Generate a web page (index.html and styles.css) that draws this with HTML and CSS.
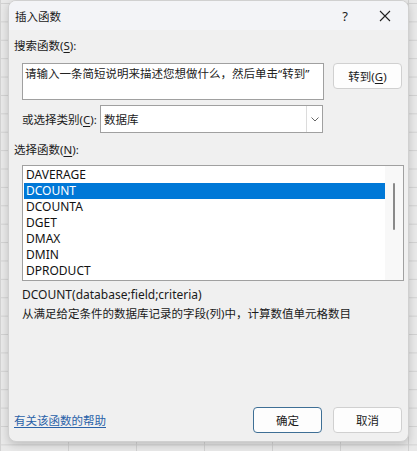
FILE: index.html
```html
<!DOCTYPE html>
<html lang="zh-CN">
<head>
<meta charset="utf-8">
<title>插入函数</title>
<link rel="stylesheet" href="styles.css">
</head>
<body>
<div class="dialog">
  <div class="titlebar">
    <span class="title cjk">插入函数</span>
    <span class="help">?</span>
    <span class="close">
      <svg width="12" height="12" viewBox="0 0 12 12"><path d="M1 1 L11 11 M11 1 L1 11" stroke="#222" stroke-width="1.1" fill="none"/></svg>
    </span>
  </div>
  <div class="content">
    <div class="label cjk">搜索函数(<u>S</u>):</div>
    <div class="search-row">
      <div class="textbox cjk">请输入一条简短说明来描述您想做什么，然后单击“转到”</div>
      <div class="btn cjk">转到(<u>G</u>)</div>
    </div>
    <div class="category-row">
      <span class="cat-label cjk">或选择类别(<u>C</u>):</span>
      <div class="select">
        <span class="select-value cjk">数据库</span>
        <span class="select-arrow">
          <svg width="8" height="5" viewBox="0 0 8 5"><path d="M0.5 0.5 L4 4 L7.5 0.5" stroke="#666" stroke-width="1" fill="none"/></svg>
        </span>
      </div>
    </div>
    <div class="label label-list cjk">选择函数(<u>N</u>):</div>
    <div class="listbox">
      <div class="items">
        <div class="item">DAVERAGE</div>
        <div class="item selected">DCOUNT</div>
        <div class="item">DCOUNTA</div>
        <div class="item">DGET</div>
        <div class="item">DMAX</div>
        <div class="item">DMIN</div>
        <div class="item">DPRODUCT</div>
      </div>
      <div class="scrollbar"><div class="thumb"></div></div>
    </div>
    <div class="syntax">DCOUNT(database;field;criteria)</div>
    <div class="desc cjk">从满足给定条件的数据库记录的字段(列)中，计算数值单元格数目</div>
  </div>
  <div class="footer">
    <a class="helplink cjk">有关该函数的帮助</a>
    <div class="buttons">
      <div class="btn btn-default cjk">确定</div>
      <div class="btn cjk">取消</div>
    </div>
  </div>
</div>
</body>
</html>
```

FILE: styles.css
```css
html, body {
  margin: 0;
  padding: 0;
}
body {
  width: 417px;
  height: 451px;
  overflow: hidden;
  background-color: #e9e9e9;
  background-image:
    linear-gradient(to right, #d2d2d2 1px, transparent 1px),
    linear-gradient(to bottom, #d2d2d2 1px, transparent 1px);
  background-size: 68px 18.4px;
  background-position: 0 0, 0 3px;
  font-family: "Noto Sans", "Noto Sans CJK SC", sans-serif;
  font-size: 12px;
  color: #1a1a1a;
}
.cjk {
  font-size: 11.5px;
  white-space: nowrap;
}
.dialog {
  margin-left: 8px;
  width: 401px;
  height: 442px;
  box-sizing: border-box;
  background: #f0f0f0;
  border-radius: 8px;
  border: 1px solid #d0d0d0;
  box-shadow: 0 3px 8px rgba(0,0,0,0.18);
  display: flex;
  flex-direction: column;
  overflow: hidden;
}
.titlebar {
  height: 29px;
  display: flex;
  align-items: center;
  background: #f3f4f7;
  padding-left: 6px;
}
.title {
  font-family: "Noto Sans CJK SC", sans-serif;
  flex: 1;
}
.help {
  width: 12px;
  text-align: center;
  font-size: 13px;
  margin-right: 28px;
}
.close {
  width: 12px;
  height: 12px;
  margin-right: 17px;
  display: flex;
}
.content {
  padding: 0 5px;
  display: flex;
  flex-direction: column;
}
.label {
  margin-top: 8px;
  height: 16px;
  line-height: 16px;
}
u {
  text-decoration: underline;
  text-underline-offset: 2px;
}
.search-row {
  margin-top: 9px;
  padding-left: 8px;
  display: flex;
  align-items: flex-start;
  gap: 9px;
}
.textbox {
  width: 302px;
  height: 37px;
  box-sizing: border-box;
  background: #fff;
  border: 1px solid #a0a0a0;
  padding: 2px 2px;
  line-height: 16px;
  color: #222;
  overflow: hidden;
}
.btn {
  width: 69px;
  height: 26px;
  flex-shrink: 0;
  box-sizing: border-box;
  background: #fdfdfd;
  border: 1px solid #d0d0d0;
  border-radius: 4px;
  display: flex;
  align-items: center;
  justify-content: center;
  color: #1a1a1a;
}
.category-row {
  margin-top: 5px;
  padding-left: 8px;
  display: flex;
  align-items: center;
}
.cat-label {
  width: 78px;
  flex-shrink: 0;
}
.select {
  width: 223px;
  height: 28px;
  flex-shrink: 0;
  box-sizing: border-box;
  background: #fff;
  border: 1px solid #a0a0a0;
  display: flex;
  align-items: center;
}
.select-value {
  flex: 1;
  padding-left: 3px;
}
.select-arrow {
  width: 15px;
  height: 26px;
  border-left: 1px solid #dcdcdc;
  display: flex;
  align-items: center;
  justify-content: center;
}
.label-list {
  margin-top: 9px;
}
.listbox {
  margin-top: 7px;
  margin-left: 8px;
  width: 382px;
  height: 116px;
  box-sizing: border-box;
  background: #fff;
  border: 1px solid #a0a0a0;
  display: flex;
}
.items {
  flex: 1;
  padding-top: 1px;
  padding-left: 1px;
}
.item {
  height: 16px;
  line-height: 16px;
  padding-left: 2px;
  color: #111;
}
.item.selected {
  background: #0078d7;
  color: #fff;
}
.scrollbar {
  width: 18px;
  background: #f8f8f8;
  display: flex;
  justify-content: center;
  padding-top: 17px;
}
.thumb {
  width: 2px;
  height: 47px;
  background: #8a8a8a;
  border-radius: 1px;
}
.syntax {
  margin-top: 6px;
  padding-left: 8px;
  height: 16px;
  line-height: 16px;
}
.desc {
  margin-top: 3px;
  padding-left: 8px;
  height: 16px;
  line-height: 16px;
}
.footer {
  margin-top: auto;
  padding: 0 6px 8px 5px;
  display: flex;
  align-items: center;
  justify-content: space-between;
}
.helplink {
  color: #2a62a8;
  text-decoration: underline;
  text-underline-offset: 2px;
}
.buttons {
  display: flex;
  gap: 11px;
}
.btn-default {
  border: 1px solid #3e6f95;
}
```
